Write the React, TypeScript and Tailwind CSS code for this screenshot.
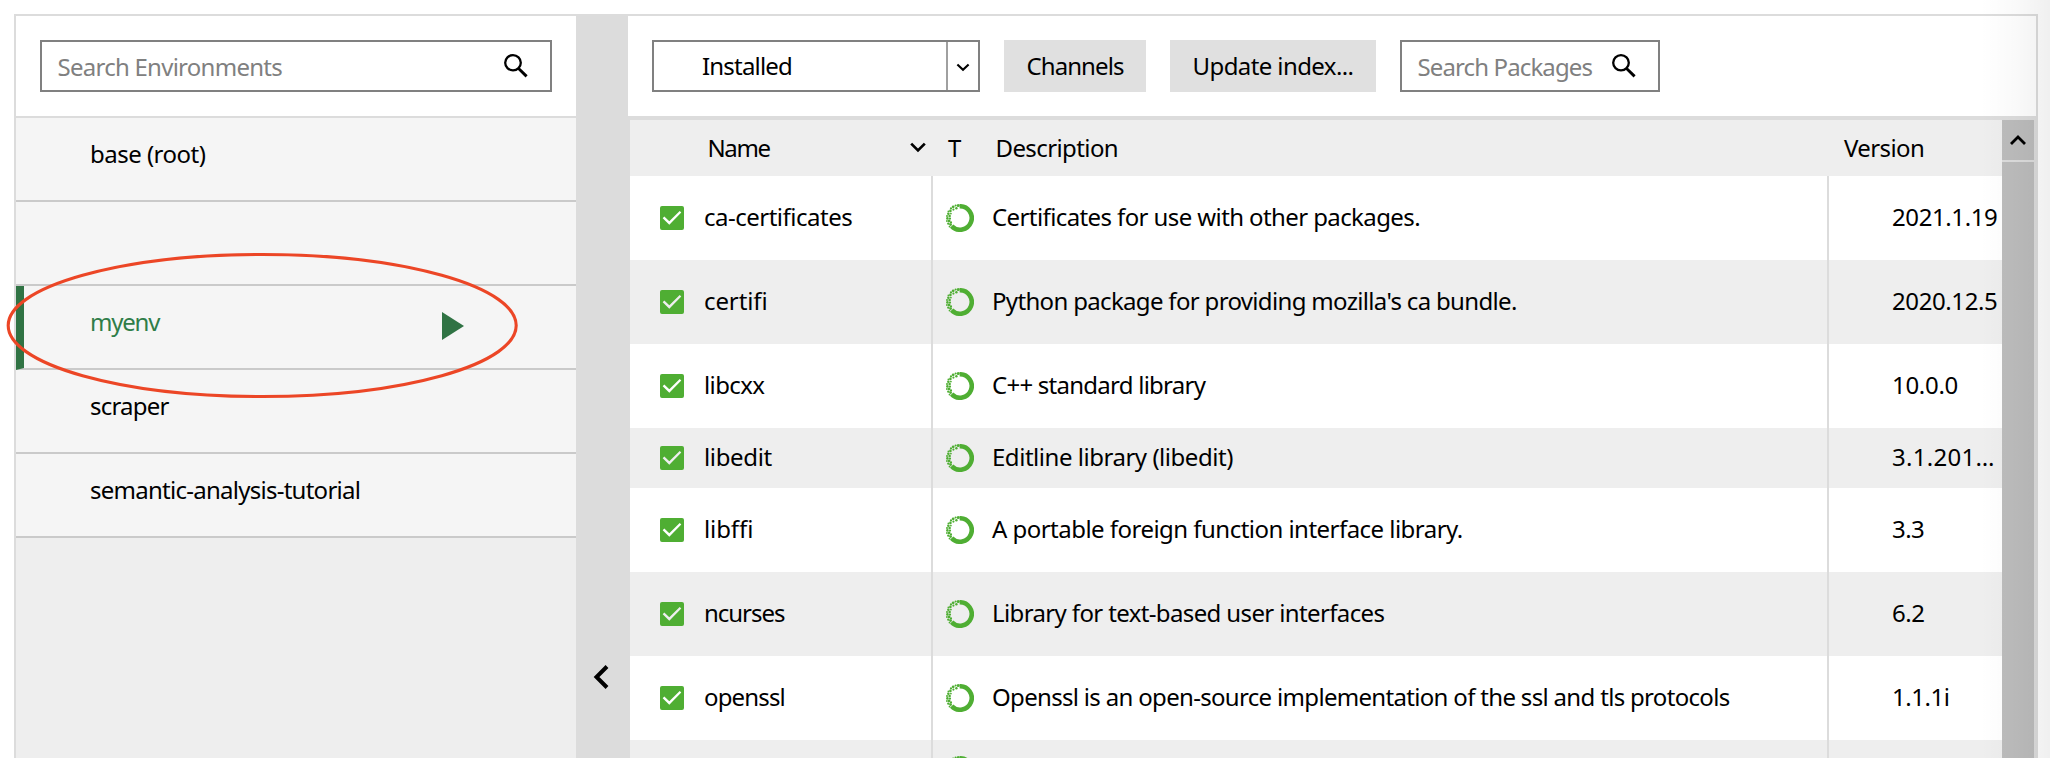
type Environment = { name: string; active?: boolean; tracking?: string };

type Package = {
  name: string;
  description: string;
  version: string;
  height: string;
  nameTracking: string;
  descriptionTracking: string;
  versionTracking: string;
};

const environments: Environment[] = [
  { name: 'base (root)', tracking: 'tracking-[-0.52px]' },
  { name: '' },
  { name: 'myenv', active: true, tracking: 'tracking-[-1.2px]' },
  { name: 'scraper', tracking: 'tracking-[-0.78px]' },
  { name: 'semantic-analysis-tutorial', tracking: 'tracking-[-0.74px]' },
];

const packages: Package[] = [
  { name: 'ca-certificates', description: 'Certificates for use with other packages.', version: '2021.1.19', height: 'h-[84px]', nameTracking: 'tracking-[-0.5px]', descriptionTracking: 'tracking-[-0.6px]', versionTracking: 'tracking-[-0.4px]' },
  { name: 'certifi', description: "Python package for providing mozilla's ca bundle.", version: '2020.12.5', height: 'h-[84px]', nameTracking: 'tracking-[-0.1px]', descriptionTracking: 'tracking-[-0.67px]', versionTracking: 'tracking-[-0.4px]' },
  { name: 'libcxx', description: 'C++ standard library', version: '10.0.0', height: 'h-[84px]', nameTracking: 'tracking-[-0.6px]', descriptionTracking: 'tracking-[-0.75px]', versionTracking: 'tracking-[-0.3px]' },
  { name: 'libedit', description: 'Editline library (libedit)', version: '3.1.201…', height: 'h-[60px]', nameTracking: 'tracking-[-0.35px]', descriptionTracking: 'tracking-[-0.47px]', versionTracking: 'tracking-[0.3px]' },
  { name: 'libffi', description: 'A portable foreign function interface library.', version: '3.3', height: 'h-[84px]', nameTracking: 'tracking-[-0.1px]', descriptionTracking: 'tracking-[-0.53px]', versionTracking: 'tracking-[-0.6px]' },
  { name: 'ncurses', description: 'Library for text-based user interfaces', version: '6.2', height: 'h-[84px]', nameTracking: 'tracking-[-1.02px]', descriptionTracking: 'tracking-[-0.63px]', versionTracking: 'tracking-[-0.5px]' },
  { name: 'openssl', description: 'Openssl is an open-source implementation of the ssl and tls protocols', version: '1.1.1i', height: 'h-[84px]', nameTracking: 'tracking-[-0.85px]', descriptionTracking: 'tracking-[-0.68px]', versionTracking: 'tracking-[-0.45px]' },
  { name: '', description: '', version: '', height: 'h-[60px]', nameTracking: '', descriptionTracking: '', versionTracking: '' },
];

function SearchIcon({ className }: { className: string }) {
  return (
    <svg viewBox="0 0 24 24" className={className} fill="none" stroke="black" strokeWidth="2.3">
      <ellipse cx="9" cy="8.8" rx="7.8" ry="7.6" />
      <path d="M14.3 14.3 22.6 22.4" strokeWidth="2.9" />
    </svg>
  );
}

function Checkbox() {
  return (
    <svg viewBox="0 0 24 24" className="size-6 shrink-0">
      <path
        fillRule="evenodd"
        fill="#4fae33"
        d="M2 0H22a2 2 0 0 1 2 2V22a2 2 0 0 1-2 2H2a2 2 0 0 1-2-2V2a2 2 0 0 1 2-2ZM4.3 10.6 2.7 12.3 9.3 18.7 21.3 6.6 19.7 4.9 9.3 15.3Z"
      />
    </svg>
  );
}

const specks: [number, number, number][] = [
  [12.2, 1.6, 1.5], [9.6, 1.6, 1], [10.4, 4.2, 1.2], [7.2, 2.8, 1.4], [5, 4.4, 1.1], [7.4, 5.6, 1.1],
  [4.4, 6.9, 1.3], [2.4, 7.4, 0.9], [2.4, 9.8, 1.3], [4.9, 9.6, 0.9], [1, 12, 1], [3.6, 12, 1.3],
  [1.4, 14.4, 1.3], [4, 14.6, 1.1], [0.9, 17, 0.9], [3.1, 16.9, 1.4], [5, 18.4, 1.1], [2.3, 19.6, 1.2],
  [4.6, 20.6, 1.4], [3.5, 22.6, 0.9],
];

function RingIcon() {
  return (
    <svg viewBox="0 0 28 28" className="size-7 shrink-0">
      <path d="M13.6 2.3A11.7 11.7 0 1 1 5.6 22.1" fill="none" stroke="#4fae33" strokeWidth="4.6" />
      {specks.map(([x, y, r]) => (
        <circle key={`${x}-${y}`} cx={x} cy={y} r={r} fill="#4fae33" />
      ))}
    </svg>
  );
}

function Toolbar() {
  return (
    <div className="flex h-[100px] items-start bg-white pt-6 pl-6">
      <div className="flex h-[52px] w-[328px] border-2 border-[#808080]">
        <div className="flex flex-1 items-center pl-[48px] tracking-[-0.81px]">Installed</div>
        <div className="flex w-8 items-center justify-center border-l-2 border-[#a0a0a0]">
          <svg viewBox="0 0 14 9" className="mt-0.5 h-[9px] w-[14px]" fill="none" stroke="black" strokeWidth="2.1">
            <path d="m1.4 1.4 5.6 5.4 5.6-5.4" />
          </svg>
        </div>
      </div>
      <button className="ml-6 flex h-[52px] w-[142px] items-center justify-center bg-[#e0e0e0] tracking-[-0.91px]">Channels</button>
      <button className="ml-6 flex h-[52px] w-[206px] items-center justify-center bg-[#e0e0e0] tracking-[-0.6px]">Update index...</button>
      <div className="ml-6 flex h-[52px] w-[260px] items-center border-2 border-[#808080]">
        <span className="w-[210px] pt-0.5 pl-[15.5px] tracking-[-0.88px] text-[#808080]">Search Packages</span>
        <SearchIcon className="size-6" />
      </div>
    </div>
  );
}

function PackageTable() {
  return (
    <div className="flex-1 overflow-hidden">
      <div className="flex h-14 items-center bg-[#eee]">
        <div className="w-[280px] pl-[77.5px] tracking-[-1.38px]">Name</div>
        <svg viewBox="0 0 16 11" className="-mt-0.5 h-[11px] w-4" fill="none" stroke="black" strokeWidth="2.7">
          <path d="m1.2 1.6 6.8 6.8 6.8-6.8" />
        </svg>
        <div className="w-[69.5px] pl-[22px]">T</div>
        <div className="w-[848.5px] tracking-[-0.6px]">Description</div>
        <div className="tracking-[-0.6px]">Version</div>
      </div>
      {packages.map((p, i) => (
        <div key={i} className={`flex ${p.height} ${i % 2 ? 'bg-[#eee]' : 'bg-white'}`}>
          <div className="flex w-[301px] items-center pl-[30px]">
            {p.name && <Checkbox />}
            <span className={`pb-0.5 pl-[20px] ${p.nameTracking}`}>{p.name}</span>
          </div>
          <div className="flex w-[896px] items-center border-l-2 border-[#dcdcdc] pl-[13px]">
            <RingIcon />
            <span className={`pb-0.5 pl-[18px] ${p.descriptionTracking}`}>{p.description}</span>
          </div>
          <div className={`flex flex-1 items-center border-l-2 border-[#dcdcdc] pb-0.5 pl-[63px] whitespace-nowrap ${p.versionTracking}`}>
            {p.version}
          </div>
        </div>
      ))}
    </div>
  );
}

export default function App() {
  return (
    <div className="relative h-[758px] w-[2050px] overflow-hidden bg-white pt-[14px] pl-[14px] font-['Noto_Sans',sans-serif] text-2xl text-black">
      <div className="flex h-[744px] w-[2024px] border-t-2 border-r-2 border-l-2 border-[#dcdcdc]">
        <aside className="flex w-[560px] flex-col bg-[#eee]">
          <div className="h-[102px] border-b-2 border-[#dcdcdc] bg-white pt-6 pl-6">
            <div className="flex h-[52px] w-[512px] items-center border-2 border-[#808080]">
              <span className="w-[462px] pt-0.5 pl-[15.5px] tracking-[-0.74px] text-[#808080]">Search Environments</span>
              <SearchIcon className="size-6" />
            </div>
          </div>
          {environments.map((env, i) => (
            <div
              key={i}
              className={`flex h-[84px] items-center border-b-2 border-b-[#cacaca] bg-[#f5f5f5] ${
                env.active ? 'border-l-8 border-l-[#307344] pl-[66px] text-[#2f7d48]' : 'pl-[74px]'
              }`}
            >
              <span className={`w-[352px] pb-2.5 ${env.tracking ?? ''}`}>{env.name}</span>
              {env.active && (
                <svg viewBox="0 0 22 28" className="-mt-0.5 h-7 w-[22px]">
                  <path d="M0 0 22 14 0 28Z" fill="#307344" />
                </svg>
              )}
            </div>
          ))}
        </aside>
        <div className="flex w-[52px] justify-center bg-[#dcdcdc] pt-[649px]">
          <svg viewBox="0 0 16 24" className="mr-0.5 h-6 w-4" fill="none" stroke="black" strokeWidth="4">
            <path d="M14 1.5 3.5 12 14 22.5" />
          </svg>
        </div>
        <main className="flex flex-1 flex-col bg-[#dcdcdc]">
          <Toolbar />
          <div className="mt-1 ml-0.5 flex h-[638px]">
            <PackageTable />
            <div className="mr-0.5 flex w-8 flex-col bg-[#bcbcbc]">
              <div className="flex h-[42px] justify-center border-b-2 border-[#dcdcdc] pt-[15px]">
                <svg viewBox="0 0 16 10" className="h-2.5 w-4" fill="none" stroke="black" strokeWidth="2.8">
                  <path d="m1 9 7-7 7 7" />
                </svg>
              </div>
            </div>
          </div>
        </main>
      </div>
      <div className="pointer-events-none absolute top-0 right-0 h-full w-[70px] bg-linear-to-r from-black/0 via-black/2 to-black/6" />
      <svg viewBox="0 0 520 160" className="pointer-events-none absolute top-[245px] left-0 h-[160px] w-[520px]" fill="none">
        <ellipse cx="262.2" cy="80.5" rx="254" ry="71" stroke="#ec4626" strokeWidth="3.1" />
      </svg>
    </div>
  );
}
